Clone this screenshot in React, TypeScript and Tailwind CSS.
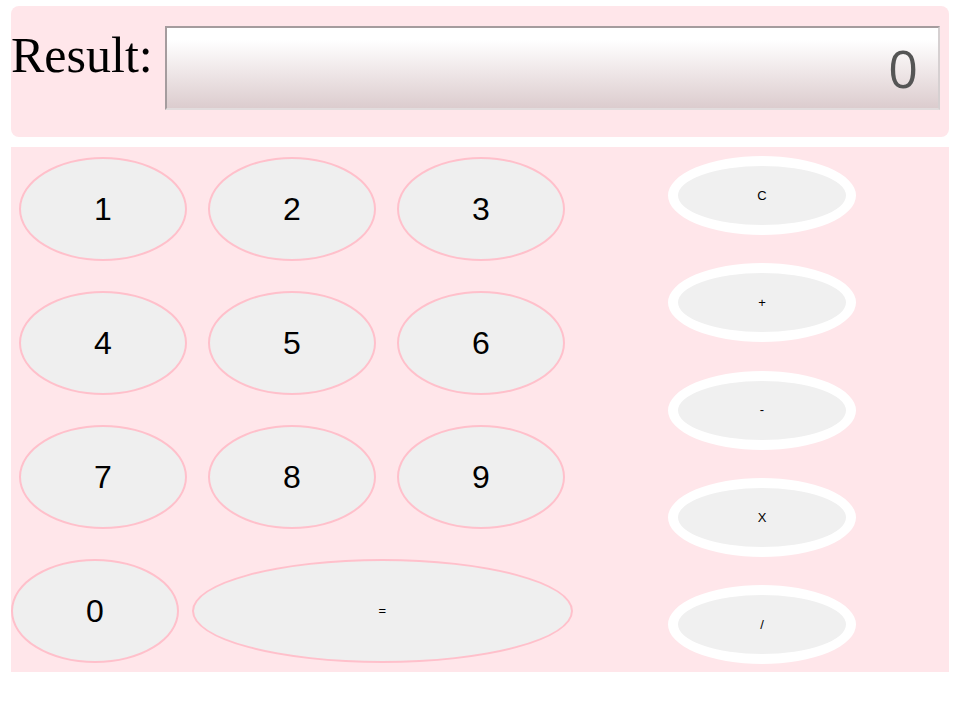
import React from "react";

const rows = [
  ["1", "2", "3"],
  ["4", "5", "6"],
  ["7", "8", "9"],
];

const ops = ["C", "+", "-", "X", "/"];

const numBtn =
  "w-[168px] h-[104px] rounded-[50%] border-2 border-[#ffc0cb] bg-[#efefef] text-[32px] text-black flex items-center justify-center";

const App = () => {
  return (
    <div
      className="pl-[11px] pt-[6px] w-[949px]"
      style={{ fontFamily: "'Liberation Sans', Arial, sans-serif" }}
    >
      <div className="h-[131px] rounded-lg bg-[#ffe6ea] flex items-start">
        <h1
          className="mt-[24px] text-[50px] leading-none text-black font-normal"
          style={{ fontFamily: "'Liberation Serif', 'Times New Roman', serif" }}
        >
          Result:
        </h1>
        <div className="ml-[12px] mt-[20px] flex-1 mr-[9px] h-[84px] border-2 border-t-[#a59c9e] border-l-[#a59c9e] border-r-[#d6d0d1] border-b-[#e2dcdd] bg-gradient-to-b from-white from-15% to-[#dcccce] flex items-center justify-end pr-[20px]">
          <span className="text-[52px] text-[#555555]" style={{ fontFamily: "'Open Sans', sans-serif" }}>
            0
          </span>
        </div>
      </div>

      <div className="mt-[10px] h-[525px] bg-[#ffe6ea] flex">
        <div className="w-[562px] pt-[10px] flex flex-col gap-[30px]">
          {rows.map((row) => (
            <div key={row[0]} className="flex gap-[21px] pl-[8px]">
              {row.map((n) => (
                <button key={n} className={numBtn}>
                  {n}
                </button>
              ))}
            </div>
          ))}
          <div className="flex gap-[13px]">
            <button className={numBtn}>0</button>
            <button className="w-[382px] h-[104px] rounded-[50%] border-2 border-[#ffc0cb] bg-[#efefef] text-[13px] text-black flex items-center justify-center">
              =
            </button>
          </div>
        </div>
        <div className="ml-[95px] pt-[9px] flex flex-col gap-[28.25px]">
          {ops.map((o) => (
            <button
              key={o}
              className="w-[188px] h-[79px] rounded-[50%] border-[10px] border-white bg-[#f0f0f0] text-[13px] text-black flex items-center justify-center"
            >
              {o}
            </button>
          ))}
        </div>
      </div>
    </div>
  );
};

export default App;
